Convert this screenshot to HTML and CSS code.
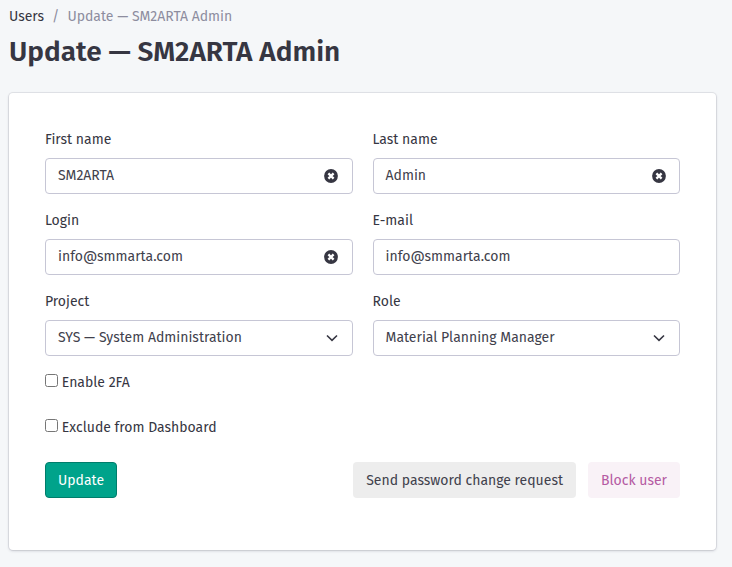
FILE: index.html
```
<!DOCTYPE html>
<html lang="en">
<head>
<meta charset="utf-8">
<title>Update — SM2ARTA Admin</title>
<link rel="stylesheet" href="styles.css">
</head>
<body>
<svg class="sprite" aria-hidden="true">
  <symbol id="clear" viewBox="0 0 14 14"><circle cx="7" cy="7" r="6.9" fill="#363642"/><path d="M4.4 4.4l5.2 5.2M9.6 4.4l-5.2 5.2" stroke="#fff" stroke-width="2.3"/></symbol>
  <symbol id="chevron" viewBox="0 0 14 14"><path d="M2 4.5L7 9.4l5-4.9" fill="none" stroke="#363642" stroke-width="1.6"/></symbol>
</svg>
<nav class="breadcrumb"><a class="crumb">Users</a><span class="sep">/</span><span>Update — SM2ARTA Admin</span></nav>
<h1 class="title">Update — SM2ARTA Admin</h1>
<main class="card">
  <div class="grid">
    <div class="field"><span class="label">First name</span><div class="input"><span>SM2ARTA</span><svg class="icon clear"><use href="#clear"/></svg></div></div>
    <div class="field"><span class="label">Last name</span><div class="input"><span>Admin</span><svg class="icon clear"><use href="#clear"/></svg></div></div>
    <div class="field"><span class="label">Login</span><div class="input"><span>info@smmarta.com</span><svg class="icon clear"><use href="#clear"/></svg></div></div>
    <div class="field"><span class="label">E-mail</span><div class="input"><span>info@smmarta.com</span></div></div>
    <div class="field"><span class="label">Project</span><div class="input"><span>SYS — System Administration</span><svg class="icon"><use href="#chevron"/></svg></div></div>
    <div class="field"><span class="label">Role</span><div class="input"><span>Material Planning Manager</span><svg class="icon"><use href="#chevron"/></svg></div></div>
  </div>
  <label class="check"><input type="checkbox" class="box">Enable 2FA</label>
  <label class="check"><input type="checkbox" class="box">Exclude from Dashboard</label>
  <div class="actions">
    <button class="btn primary">Update</button>
    <button class="btn neutral">Send password change request</button>
    <button class="btn danger">Block user</button>
  </div>
</main>
</body>
</html>
```
FILE: styles.css
```
* { box-sizing: border-box; }
body {
  margin: 0;
  padding: 6px 16px 16px 9px;
  background: #f5f7f9;
  color: #363642;
  font: 14px/21px "Fira Sans", "Noto Sans", sans-serif;
}
.sprite { display: none; }
.breadcrumb { display: flex; height: 21px; color: #8d8d9f; }
.crumb { color: #363642; }
.sep { margin: 0 8px; }
.title { margin: 8px 0 0; font-size: 28px; line-height: 34px; font-weight: 600; }
.card {
  margin-top: 24px;
  height: 457px;
  padding: 36px 36px 0;
  border-radius: 4px;
  background: #fff;
  box-shadow: 0 0 0 1px rgba(54, 54, 80, .09), 0 1px 3px rgba(54, 54, 80, .2);
}
.grid { display: grid; grid-template-columns: 1fr 1fr; column-gap: 20px; row-gap: 15px; }
.field { height: 66px; display: flex; flex-direction: column; }
.label { height: 29px; line-height: 21px; }
.input {
  height: 36px;
  padding: 0 13px 2px 12px;
  border: 1px solid #c6c6d5;
  border-radius: 4px;
  display: flex;
  justify-content: space-between;
  align-items: center;
  color: #41414c;
}
.icon { width: 14px; height: 14px; margin-top: 1px; }
.clear { margin-right: .4px; }
.check { display: flex; align-items: center; height: 21px; margin-top: 15px; }
.check + .check { margin-top: 24px; }
.box { width: 13px; height: 13px; margin: 0 3.8px 4px 0; }
.actions { display: flex; gap: 12px; margin-top: 24px; }
.btn {
  height: 36px;
  padding: 0 12px;
  border: 1px solid transparent;
  border-radius: 4px;
  font: inherit;
  color: #41414c;
}
.primary { margin-right: auto; background: #00a38b; border-color: #007d6b; color: #fff; }
.neutral { background: #ededed; }
.danger { background: #f9f2f7; color: #b55ba3; }
```
